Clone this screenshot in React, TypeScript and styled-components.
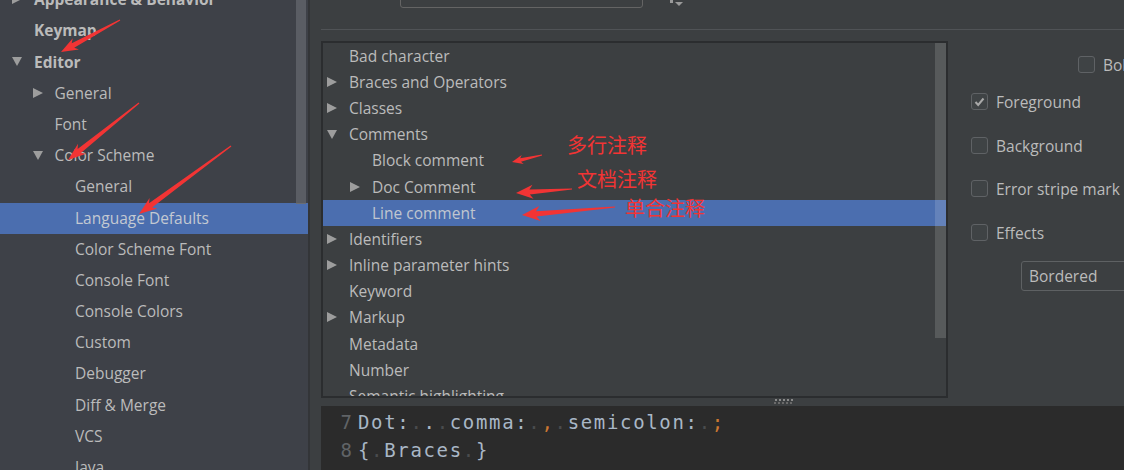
import React from "react";
import styled, { createGlobalStyle } from "styled-components";

const GlobalStyle = createGlobalStyle`
  html, body { margin: 0; padding: 0; background: #3c3f41; }
  body { overflow: hidden; }
  #root { width: 1124px; height: 470px; }
`;

const Page = styled.div`
  position: relative;
  width: 1124px;
  height: 470px;
  overflow: hidden;
  display: flex;
  background: #3c3f41;
  color: #bbbbbb;
  font-family: "Open Sans", "Noto Sans", sans-serif;
  font-size: 15.5px;
`;

/* ---------- Sidebar ---------- */
const Sidebar = styled.aside`
  position: relative;
  flex: 0 0 310px;
  box-sizing: border-box;
  border-right: 2px solid #333538;
  background: #3e4148;
  overflow: hidden;
`;

const Tree = styled.ul`
  list-style: none;
  margin: -15.4px 0 0;
  padding: 0;
`;

const TreeRow = styled.li<{ $depth: number; $selected?: boolean; $bold?: boolean }>`
  display: flex;
  align-items: center;
  box-sizing: border-box;
  height: 31.2px;
  padding-left: ${(p) => 12 + p.$depth * 20.5}px;
  padding-bottom: 2px;
  background: ${(p) => (p.$selected ? "#4b6eaf" : "transparent")};
  color: ${(p) => (p.$selected ? "#c3c9d2" : "#bbbbbb")};
  font-weight: ${(p) => (p.$bold ? 700 : 400)};
  white-space: nowrap;
`;

const ToggleSlot = styled.span`
  flex: 0 0 22px;
  display: flex;
  align-items: center;
`;

const Triangle = styled.span<{ $open?: boolean }>`
  width: 0;
  height: 0;
  ${(p) =>
    p.$open
      ? `border-left: 5.5px solid transparent; border-right: 5.5px solid transparent; border-top: 9px solid #9d9d9d;`
      : `border-top: 5.5px solid transparent; border-bottom: 5.5px solid transparent; border-left: 10px solid #9d9d9d;`}
`;

const SideThumb = styled.div`
  position: absolute;
  top: 0;
  right: 2px;
  width: 10px;
  height: 203px;
  background: #5a5d64;
  border-bottom: 1px solid #6a6d74;
`;

/* ---------- Main ---------- */
const Main = styled.main`
  flex: 1;
  display: flex;
  flex-direction: column;
  padding-left: 11px;
  min-width: 0;
  height: 470px;
  overflow: hidden;
  & > * { flex-shrink: 0; }
`;

const Toolbar = styled.div`
  height: 29px;
  display: flex;
  align-items: flex-start;
`;

const SearchField = styled.div`
  margin: -22px 0 0 79px;
  width: 243px;
  height: 30px;
  box-sizing: border-box;
  border: 1px solid #646464;
  border-radius: 3px;
  background: #3c3f41;
`;

const FilterIcon = styled.svg`
  margin-left: 27px;
  display: block;
`;

const Separator = styled.div`
  height: 1px;
  background: #505356;
  margin-bottom: 11px;
`;

const ContentRow = styled.div`
  height: 357px;
  display: flex;
`;

const ListPanel = styled.div`
  position: relative;
  flex: 0 0 627px;
  box-sizing: border-box;
  border: 2px solid #2b2d2f;
  background: #3c3f41;
  overflow: hidden;
`;

const ListRow = styled.div<{ $depth: number; $selected?: boolean }>`
  display: flex;
  align-items: center;
  box-sizing: border-box;
  height: 26.2px;
  padding-left: ${(p) => 4 + p.$depth * 23}px;
  padding-bottom: 1px;
  background: ${(p) => (p.$selected ? "#4b6eaf" : "transparent")};
  color: ${(p) => (p.$selected ? "#c0c6cf" : "#bbbbbb")};
  white-space: nowrap;
`;

const ListThumb = styled.div`
  position: absolute;
  top: 0;
  right: 0;
  width: 11px;
  height: 295px;
  background: rgba(255, 255, 255, 0.14);
  z-index: 2;
`;

const Options = styled.div`
  flex: 1;
  overflow: hidden;
  display: flex;
  flex-direction: column;
  align-items: flex-start;
  padding: 15px 0 0 23px;
`;

const CheckRow = styled.div<{ $indent?: number; $top?: number }>`
  display: flex;
  align-items: center;
  gap: 8px;
  height: 17px;
  margin-left: ${(p) => p.$indent ?? 0}px;
  margin-top: ${(p) => p.$top ?? 0}px;
  white-space: nowrap;
`;

const Box = styled.span`
  flex: 0 0 17px;
  width: 17px;
  height: 17px;
  box-sizing: border-box;
  border: 1px solid #5f6265;
  border-radius: 3px;
  background: #3f4345;
  display: flex;
  align-items: center;
  justify-content: center;
`;

const Dropdown = styled.div`
  margin: 20px 0 0 50px;
  width: 150px;
  height: 30px;
  box-sizing: border-box;
  border: 1px solid #5e6163;
  border-radius: 3px;
  background: #3c3f41;
  display: flex;
  align-items: center;
  padding-left: 7px;
  white-space: nowrap;
`;

const Splitter = styled.div`
  height: 8px;
  display: flex;
  align-items: flex-start;
`;

const Grip = styled.svg`
  margin: 1px 0 0 453px;
  display: block;
`;

const Editor = styled.div`
  flex: 1 1 auto;
  min-height: 0;
  overflow: hidden;
  display: flex;
  background: #2b2b2b;
  padding-top: 2px;
  font-family: "DejaVu Sans Mono", "Liberation Mono", monospace;
  font-size: 19px;
  line-height: 28px;
`;

const Gutter = styled.div`
  flex: 0 0 37px;
  box-sizing: border-box;
  padding-right: 6px;
  text-align: right;
  color: #606366;
`;

const Code = styled.div`
  flex: 1;
  color: #a9b7c6;
  letter-spacing: 1.66px;
  white-space: pre;
`;

const Ws = styled.span`
  color: #4a4c4e;
`;

const Punct = styled.span`
  color: #cc7832;
`;

/* ---------- Annotations ---------- */
const Overlay = styled.div`
  position: absolute;
  inset: 0;
  pointer-events: none;
  z-index: 10;
`;

const Note = styled.span<{ $x: number; $y: number }>`
  position: absolute;
  left: ${(p) => p.$x}px;
  top: ${(p) => p.$y}px;
  color: #f23434;
  font-family: "Noto Sans CJK SC", sans-serif;
  font-size: 20px;
  line-height: 22px;
  white-space: nowrap;
`;

type Arrow = { x1: number; y1: number; x2: number; y2: number; head: number; hw: number; neck: number };

const arrowPoints = (a: Arrow) => {
  const dx = a.x2 - a.x1;
  const dy = a.y2 - a.y1;
  const L = Math.hypot(dx, dy);
  const ux = dx / L;
  const uy = dy / L;
  const nx = -uy;
  const ny = ux;
  const bx = a.x2 - ux * a.head;
  const by = a.y2 - uy * a.head;
  const cx = a.x2 - ux * a.head * 0.8;
  const cy = a.y2 - uy * a.head * 0.8;
  const t = 0.6;
  const pts = [
    [a.x1 + nx * t, a.y1 + ny * t],
    [cx + nx * a.neck, cy + ny * a.neck],
    [bx + nx * a.hw, by + ny * a.hw],
    [a.x2, a.y2],
    [bx - nx * a.hw, by - ny * a.hw],
    [cx - nx * a.neck, cy - ny * a.neck],
    [a.x1 - nx * t, a.y1 - ny * t],
  ];
  return pts.map((p) => `${p[0].toFixed(1)},${p[1].toFixed(1)}`).join(" ");
};

const arrows: Arrow[] = [
  { x1: 120, y1: 20, x2: 61, y2: 52, head: 17, hw: 6.5, neck: 2.6 },
  { x1: 139, y1: 103, x2: 68, y2: 160, head: 18, hw: 6.5, neck: 2.6 },
  { x1: 231, y1: 146, x2: 139, y2: 214, head: 18, hw: 6.5, neck: 2.6 },
  { x1: 542, y1: 155, x2: 512, y2: 162, head: 11, hw: 4.5, neck: 1.8 },
  { x1: 572, y1: 189, x2: 516, y2: 193, head: 17, hw: 7, neck: 2.6 },
  { x1: 615, y1: 207, x2: 522, y2: 215, head: 18, hw: 7.5, neck: 2.6 },
];

/* ---------- Data ---------- */
type Node = { label: string; depth: number; toggle?: "open" | "closed"; bold?: boolean; selected?: boolean };

const sideTree: Node[] = [
  { label: "Appearance & Behavior", depth: 0, toggle: "closed", bold: true },
  { label: "Keymap", depth: 0, bold: true },
  { label: "Editor", depth: 0, toggle: "open", bold: true },
  { label: "General", depth: 1, toggle: "closed" },
  { label: "Font", depth: 1 },
  { label: "Color Scheme", depth: 1, toggle: "open" },
  { label: "General", depth: 2 },
  { label: "Language Defaults", depth: 2, selected: true },
  { label: "Color Scheme Font", depth: 2 },
  { label: "Console Font", depth: 2 },
  { label: "Console Colors", depth: 2 },
  { label: "Custom", depth: 2 },
  { label: "Debugger", depth: 2 },
  { label: "Diff & Merge", depth: 2 },
  { label: "VCS", depth: 2 },
  { label: "Java", depth: 2 },
];

const attrList: Node[] = [
  { label: "Bad character", depth: 0 },
  { label: "Braces and Operators", depth: 0, toggle: "closed" },
  { label: "Classes", depth: 0, toggle: "closed" },
  { label: "Comments", depth: 0, toggle: "open" },
  { label: "Block comment", depth: 1 },
  { label: "Doc Comment", depth: 1, toggle: "closed" },
  { label: "Line comment", depth: 1, selected: true },
  { label: "Identifiers", depth: 0, toggle: "closed" },
  { label: "Inline parameter hints", depth: 0, toggle: "closed" },
  { label: "Keyword", depth: 0 },
  { label: "Markup", depth: 0, toggle: "closed" },
  { label: "Metadata", depth: 0 },
  { label: "Number", depth: 0 },
  { label: "Semantic highlighting", depth: 0 },
];

const Toggle = ({ t }: { t?: "open" | "closed" }) => (
  <ToggleSlot>{t && <Triangle $open={t === "open"} />}</ToggleSlot>
);

const CheckMark = () => (
  <svg width="11" height="10" viewBox="0 0 11 10">
    <polyline points="1.5,5 4.2,8 9.5,1.5" fill="none" stroke="#a8a8a8" strokeWidth="2" />
  </svg>
);

const W = () => <Ws>.</Ws>;

export default function App() {
  return (
    <Page>
      <GlobalStyle />
      <Sidebar>
        <Tree>
          {sideTree.map((n, i) => (
            <TreeRow key={i} $depth={n.depth} $bold={n.bold} $selected={n.selected}>
              <Toggle t={n.toggle} />
              {n.label}
            </TreeRow>
          ))}
        </Tree>
        <SideThumb />
      </Sidebar>

      <Main>
        <Toolbar>
          <SearchField />
          <FilterIcon width="14" height="7" viewBox="0 0 14 7">
            <rect x="0" y="0" width="3" height="3" fill="#9a9a9a" />
            <polygon points="5,2 13,2 9,6" fill="#9a9a9a" />
          </FilterIcon>
        </Toolbar>
        <Separator />
        <ContentRow>
          <ListPanel>
            {attrList.map((n, i) => (
              <ListRow key={i} $depth={n.depth} $selected={n.selected}>
                <Toggle t={n.toggle} />
                {n.label}
              </ListRow>
            ))}
            <ListThumb />
          </ListPanel>
          <Options>
            <CheckRow $indent={107}>
              <Box />
              Bold
            </CheckRow>
            <CheckRow $top={20}>
              <Box>
                <CheckMark />
              </Box>
              Foreground
            </CheckRow>
            <CheckRow $top={27}>
              <Box />
              Background
            </CheckRow>
            <CheckRow $top={26}>
              <Box />
              Error stripe mark
            </CheckRow>
            <CheckRow $top={27}>
              <Box />
              Effects
            </CheckRow>
            <Dropdown>Bordered</Dropdown>
          </Options>
        </ContentRow>
        <Splitter>
          <Grip width="20" height="6" viewBox="0 0 20 6">
            {[0, 1, 2, 3, 4].map((i) => (
              <g key={i} fill="#8a8a8a">
                <rect x={1 + i * 4} y="0" width="2" height="2" />
                <rect x={0 + i * 4} y="3" width="2" height="2" fill="#6a6a6a" />
              </g>
            ))}
          </Grip>
        </Splitter>
        <Editor>
          <Gutter>
            <div>7</div>
            <div>8</div>
            <div>9</div>
          </Gutter>
          <Code>
            <div>
              Dot:<W />.<W />comma:<W />
              <Punct>,</Punct>
              <W />semicolon:<W />
              <Punct>;</Punct>
            </div>
            <div>
              {"{"}
              <W />Braces<W />
              {"}"}
            </div>
            <div>
              (<W />Parentheses<W />)
            </div>
          </Code>
        </Editor>
      </Main>

      <Overlay>
        <svg width="1124" height="470" viewBox="0 0 1124 470">
          {arrows.map((a, i) => (
            <polygon key={i} points={arrowPoints(a)} fill="#f23434" />
          ))}
        </svg>
        <Note $x={567} $y={134}>多行注释</Note>
        <Note $x={577} $y={168}>文档注释</Note>
        <Note $x={625} $y={197}>单合注释</Note>
      </Overlay>
    </Page>
  );
}
